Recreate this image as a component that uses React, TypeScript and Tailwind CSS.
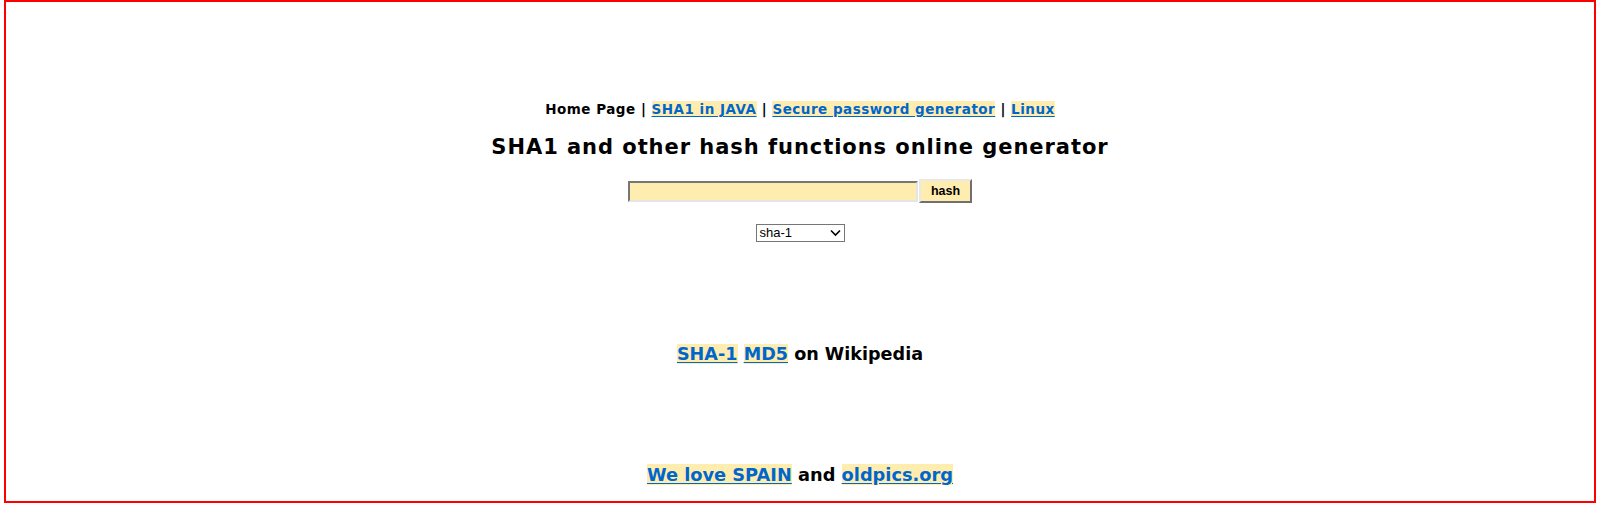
import React from "react";

const linkCls =
  "text-[#0066cc] bg-[#ffedb0] underline decoration-[#0066cc] underline-offset-[2px]";

export default function App() {
  return (
    <div className="bg-white w-full h-[527px]" style={{ fontFamily: '"DejaVu Sans", Verdana, sans-serif' }}>
      <div className="mx-auto w-[99.5%] h-[503px] border-2 border-[#ff0000] text-center text-black font-bold">
        <div className="mt-[99px] text-[13.5px] leading-[16px] tracking-[0.5px]">
          Home Page | <a href="#" className={linkCls}>SHA1 in JAVA</a> |{" "}
          <a href="#" className={linkCls}>Secure password generator</a> |{" "}
          <a href="#" className={linkCls}>Linux</a>
        </div>
        <h1 className="mt-[18px] text-[21px] leading-[24px] font-bold tracking-[0.95px]">
          SHA1 and other hash functions online generator
        </h1>
        <div className="mt-[20px] flex justify-center items-center h-[24px]">
          <div className="w-[290px] h-[21px] bg-[#ffedb0] border-2 border-t-[#767676] border-l-[#767676] border-b-[#e5e5e5] border-r-[#e5e5e5]" />
          <button
            className="ml-[1px] w-[53px] h-[24px] bg-[#ffedb0] border-2 border-t-[#e8e8e8] border-l-[#e8e8e8] border-b-[#707070] border-r-[#707070] text-[12.5px] font-bold leading-none text-black"
            style={{ fontFamily: '"Liberation Sans", Arial, sans-serif' }}
          >
            hash
          </button>
        </div>
        <div className="mt-[21px] flex justify-center">
          <div
            className="relative w-[89px] h-[18px] border border-[#767676] bg-white text-left font-normal text-[13px] leading-[16px] pl-[3px] text-black"
            style={{ fontFamily: '"Liberation Sans", Arial, sans-serif' }}
          >
            sha-1
            <svg
              className="absolute right-[3px] top-[4px]"
              width="11"
              height="8"
              viewBox="0 0 11 8"
              fill="none"
            >
              <path d="M1 1.5 L5.5 6 L10 1.5" stroke="#000" strokeWidth="1.6" />
            </svg>
          </div>
        </div>
        <div className="mt-[102px] text-[17.6px] leading-[20px]">
          <a href="#" className={linkCls}>SHA-1</a>{" "}
          <a href="#" className={linkCls}>MD5</a> on Wikipedia
        </div>
        <div className="mt-[101px] text-[17.8px] leading-[20px]">
          <a href="#" className={linkCls}>We love SPAIN</a> and{" "}
          <a href="#" className={linkCls}>oldpics.org</a>
        </div>
      </div>
    </div>
  );
}
